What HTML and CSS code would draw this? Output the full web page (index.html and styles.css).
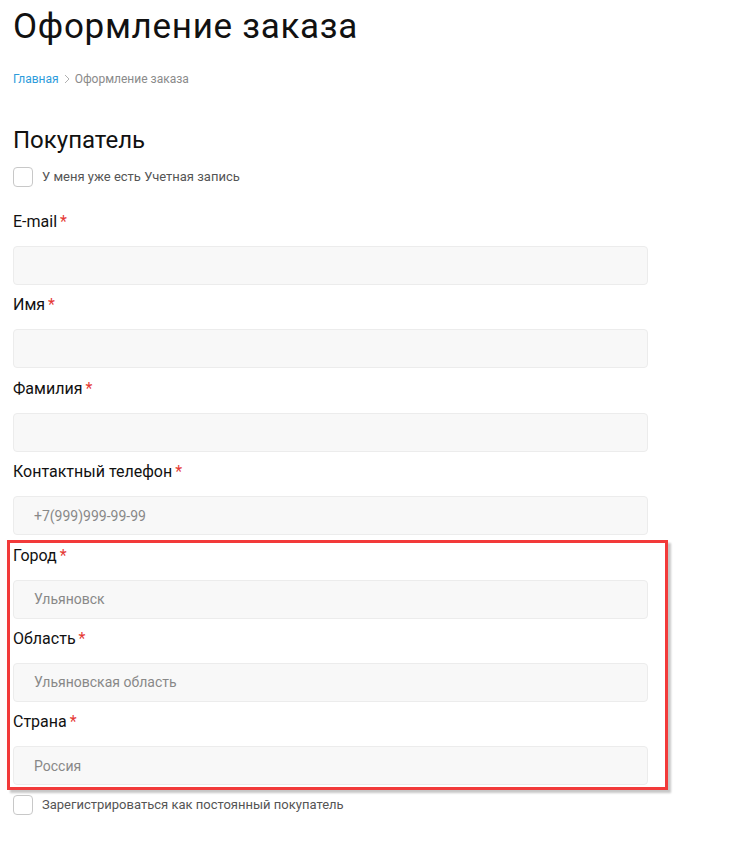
FILE: index.html
```html
<!DOCTYPE html>
<html lang="ru">
<head>
<meta charset="utf-8">
<title>Оформление заказа</title>
<link rel="stylesheet" href="styles.css">
</head>
<body>
<div class="page">
  <h1 class="title">Оформление заказа</h1>
  <nav class="crumbs">
    <a class="crumb-link" href="#">Главная</a>
    <svg class="crumb-sep" width="8" height="10" viewBox="0 0 8 10"><path d="M2 1l4 4-4 4" fill="none" stroke="#b0b0b0" stroke-width="1"/></svg>
    <span class="crumb-current">Оформление заказа</span>
  </nav>
  <h2 class="section">Покупатель</h2>
  <label class="check"><span class="box"></span><span class="check-text">У меня уже есть Учетная запись</span></label>
  <div class="fields">
    <div class="field"><div class="label">E-mail<span class="req">*</span></div><div class="input"></div></div>
    <div class="field"><div class="label">Имя<span class="req">*</span></div><div class="input"></div></div>
    <div class="field"><div class="label">Фамилия<span class="req">*</span></div><div class="input"></div></div>
    <div class="field"><div class="label">Контактный телефон<span class="req">*</span></div><div class="input"><span class="ph">+7(999)999-99-99</span></div></div>
    <div class="field"><div class="label">Город<span class="req">*</span></div><div class="input"><span class="ph">Ульяновск</span></div></div>
    <div class="field"><div class="label">Область<span class="req">*</span></div><div class="input"><span class="ph">Ульяновская область</span></div></div>
    <div class="field"><div class="label">Страна<span class="req">*</span></div><div class="input"><span class="ph">Россия</span></div></div>
  </div>
  <label class="check check-bottom"><span class="box"></span><span class="check-text">Зарегистрироваться как постоянный покупатель</span></label>
</div>
<div class="highlight"></div>
</body>
</html>
```
FILE: styles.css
```css
html, body { margin: 0; padding: 0; background: #fff; }
body { font-family: Roboto, "Noto Sans", sans-serif; color: #111; position: relative; }
.page { padding: 0 92px 0 13px; }
.title { margin: 0; padding-top: 6px; font-size: 35px; font-weight: 400; line-height: 42px; letter-spacing: 0.7px; color: #111; }
.crumbs { display: flex; align-items: center; gap: 4px; margin-top: 23px; font-size: 12px; line-height: 16px; }
.crumb-link { color: #2d9cdb; text-decoration: none; }
.crumb-current { color: #8a8a8a; }
.section { margin: 38px 0 0; font-size: 24px; font-weight: 400; line-height: 30px; color: #111; }
.check { display: flex; align-items: center; gap: 9px; margin-top: 12px; }
.box { border: 1px solid #c8c8c8; border-radius: 4px; box-sizing: border-box; flex: none; width: 20px; height: 20px; }
.check-text { font-size: 13px; color: #555; line-height: 18px; }
.fields { display: flex; flex-direction: column; gap: 10.4px; margin-top: 25px; }
.field { display: flex; flex-direction: column; gap: 14px; }
.label { font-size: 16px; line-height: 20px; color: #111; }
.req { color: #e53935; margin-left: 3px; }
.input { height: 39px; box-sizing: border-box; background: #f8f8f8; border: 1px solid #ececec; border-radius: 4px; display: flex; align-items: center; padding-left: 20px; }
.ph { font-size: 14px; color: #888; }
.check-bottom { margin-top: 10px; }
.highlight { position: absolute; left: 7px; top: 540px; width: 655px; height: 244px; border: 3px solid #f23a3a; box-shadow: 3px 3px 2px rgba(0,0,0,0.22); pointer-events: none; }
```
